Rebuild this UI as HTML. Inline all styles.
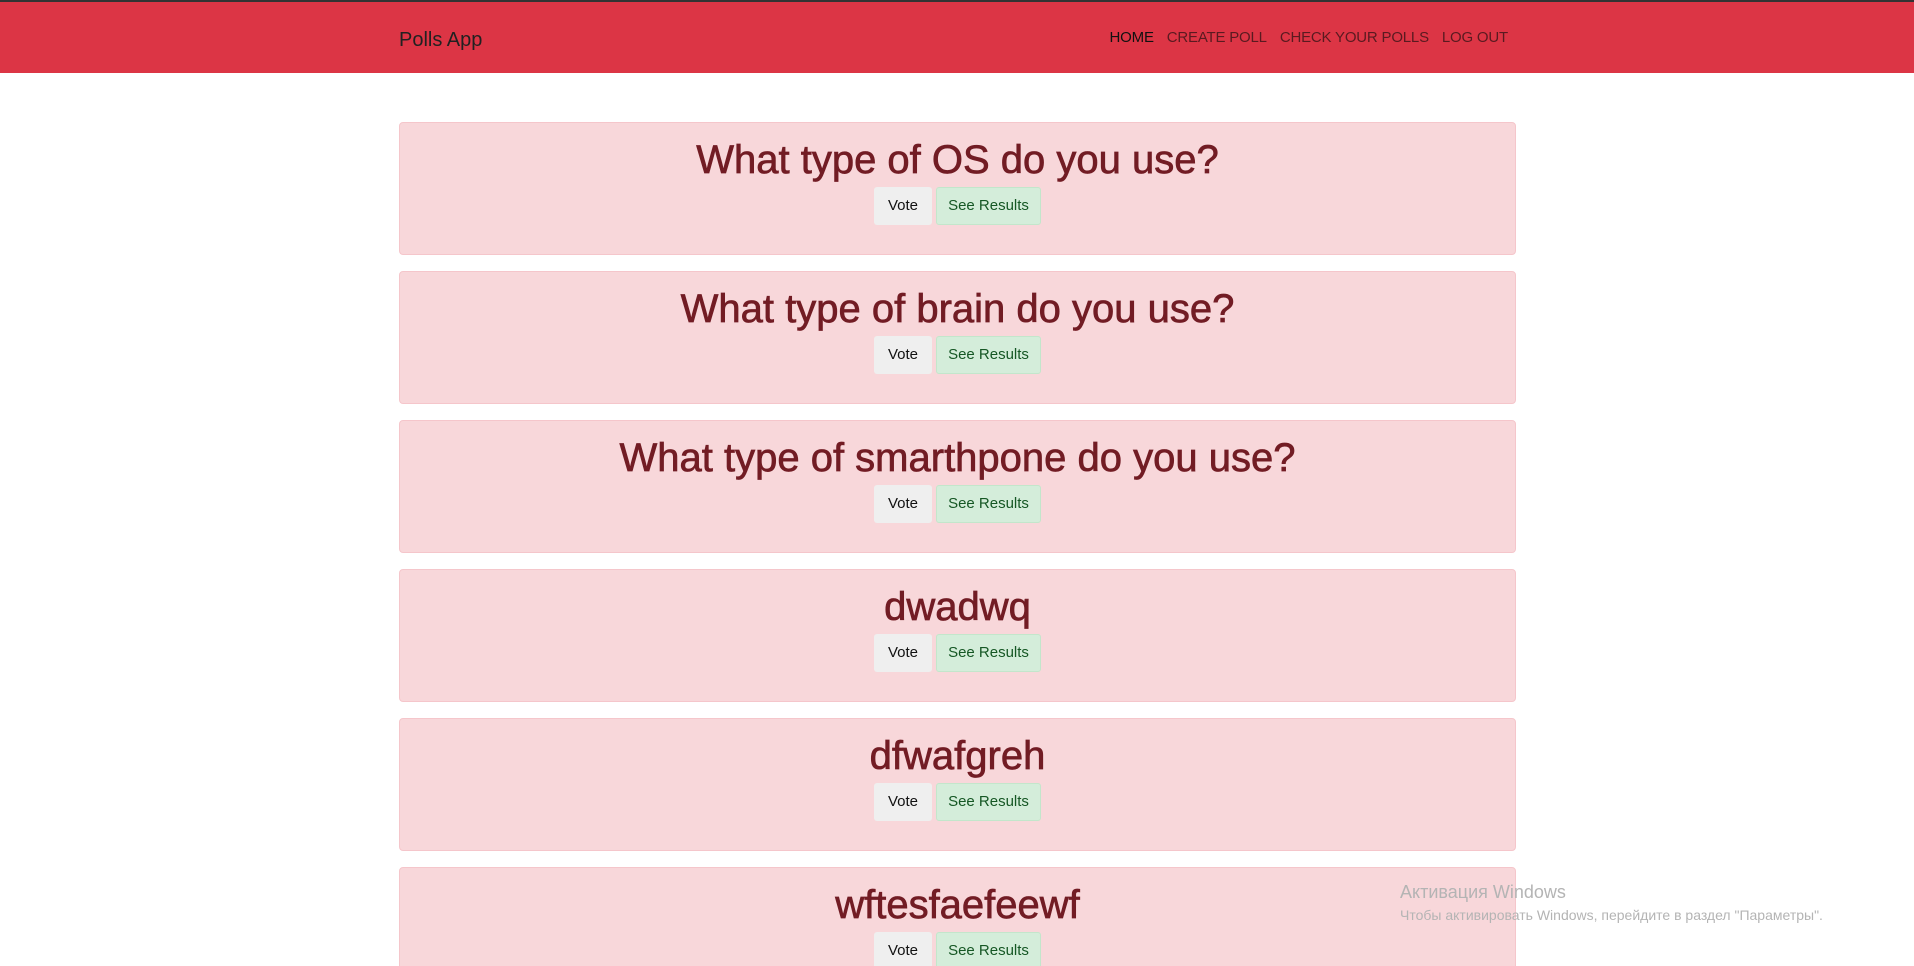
<!DOCTYPE html>
<html><head><meta charset="utf-8"><style>
html,body{margin:0;height:966px;overflow:hidden}
body{background:#fff;font-family:"Liberation Sans",sans-serif;width:1914px;position:relative}
.nav{height:71px;background:#dc3545;border-top:2px solid #333;position:relative}
.brand{position:absolute;left:399px;top:27px;font-size:20px;color:#212121}
.links{position:absolute;right:406px;top:27px;font-size:15px;color:#5a1a20;letter-spacing:-0.2px}
.links span{margin-left:13px}
.links .a{color:#111}
.card{position:absolute;left:399px;width:1115px;height:131px;background:#f8d7da;border:1px solid #f5c6cb;border-radius:4px;text-align:center}
.card h1{margin:13px 0 0;font-size:40px;line-height:48px;font-weight:normal;color:#721c24;-webkit-text-stroke:0.7px #721c24}
.btns{position:absolute;top:64px;left:0;right:0;text-align:center;font-size:15px}
.b{display:inline-block;height:38px;line-height:38px;border-radius:3px;vertical-align:top}
.v{width:58px;background:#efefef;color:#111;margin-right:4px}
.s{width:103px;background:#d4edda;border:1px solid #c3e6cb;height:36px;line-height:36px;color:#155724}
.wm{position:absolute;left:1400px;color:#b4b4b4}
</style></head><body>
<div class="nav"><div class="brand">Polls App</div>
<div class="links"><span class="a">HOME</span><span>CREATE POLL</span><span>CHECK YOUR POLLS</span><span>LOG OUT</span></div></div>
<div class="card" style="top:122px"><h1>What type of OS do you use?</h1><div class="btns"><span class="b v">Vote</span><span class="b s">See Results</span></div></div>
<div class="card" style="top:271px"><h1>What type of brain do you use?</h1><div class="btns"><span class="b v">Vote</span><span class="b s">See Results</span></div></div>
<div class="card" style="top:420px"><h1>What type of smarthpone do you use?</h1><div class="btns"><span class="b v">Vote</span><span class="b s">See Results</span></div></div>
<div class="card" style="top:569px"><h1>dwadwq</h1><div class="btns"><span class="b v">Vote</span><span class="b s">See Results</span></div></div>
<div class="card" style="top:718px"><h1>dfwafgreh</h1><div class="btns"><span class="b v">Vote</span><span class="b s">See Results</span></div></div>
<div class="card" style="top:867px"><h1>wftesfaefeewf</h1><div class="btns"><span class="b v">Vote</span><span class="b s">See Results</span></div></div>
<div class="wm" style="top:882px;font-size:18px">Активация Windows</div>
<div class="wm" style="top:907px;font-size:14px">Чтобы активировать Windows, перейдите в раздел "Параметры".</div>
</body></html>
